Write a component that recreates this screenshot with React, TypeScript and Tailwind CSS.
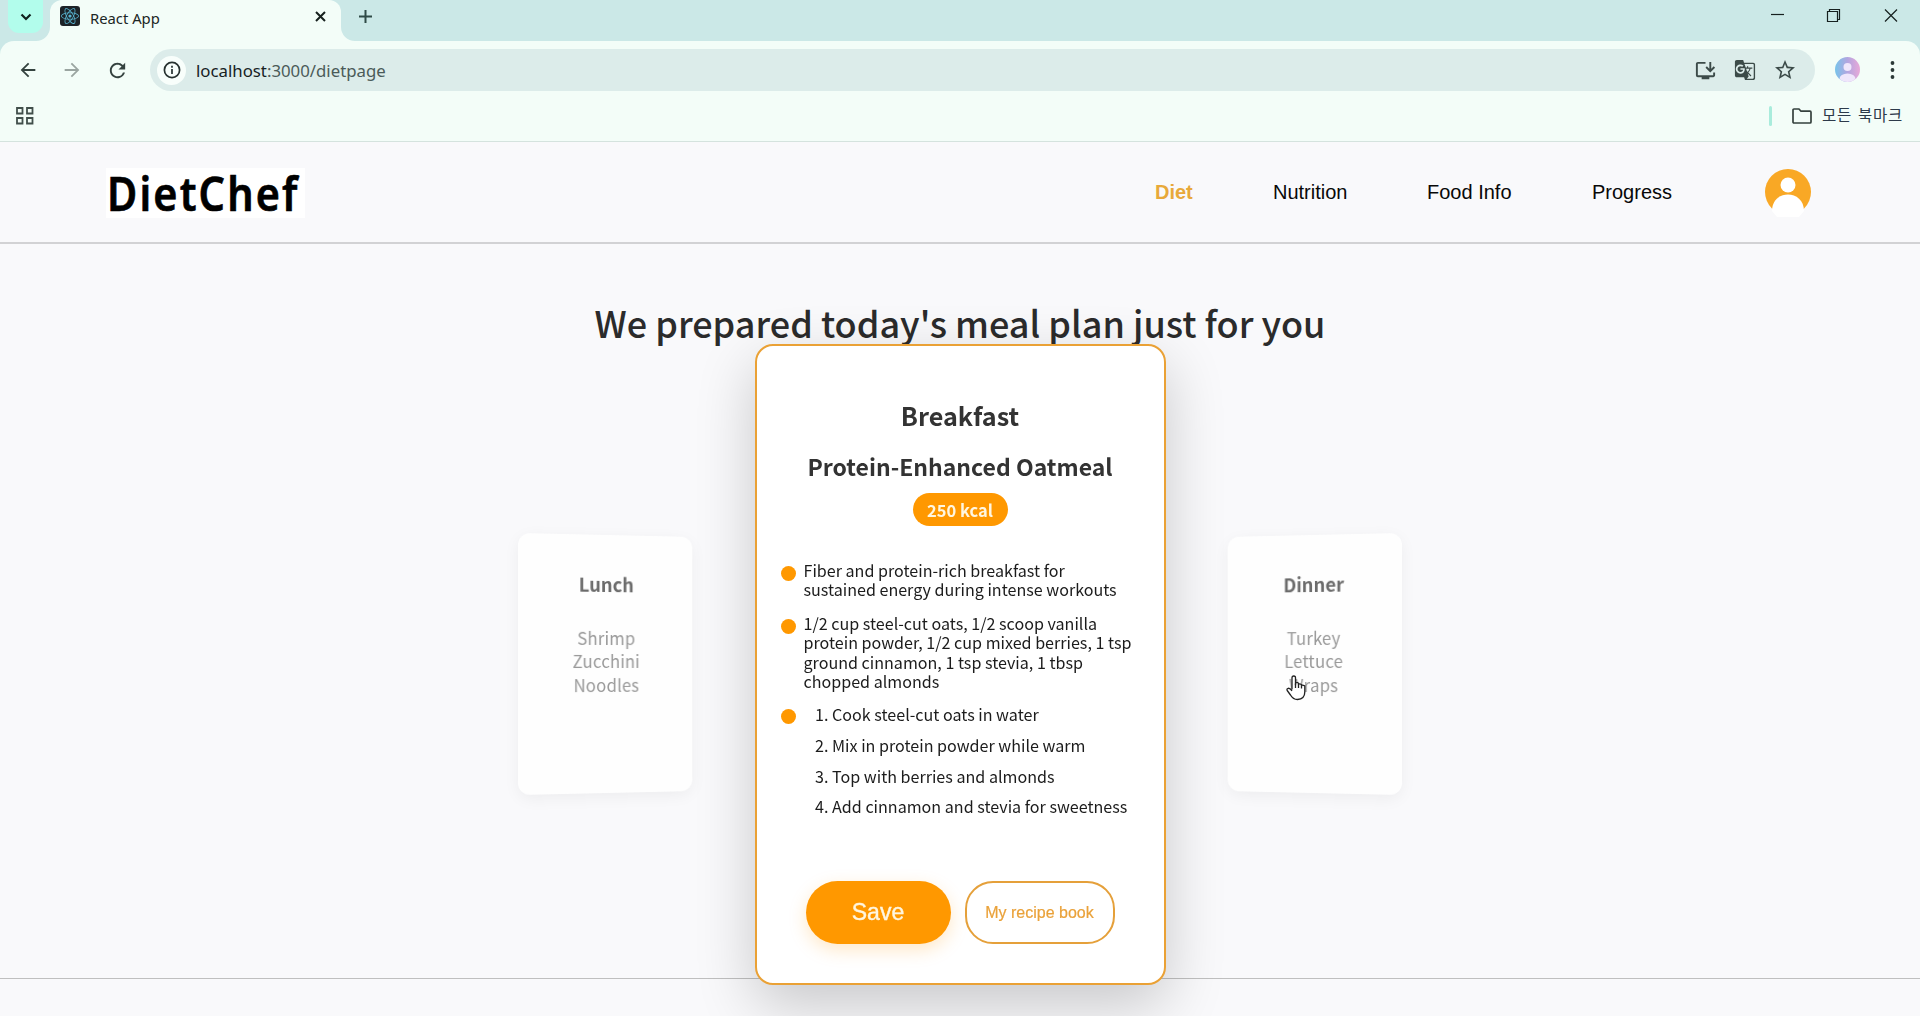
import React from "react";
import { FaReact } from "react-icons/fa";
import { MdGTranslate, MdInstallDesktop, MdStarBorder, MdArrowBack, MdArrowForward, MdRefresh } from "react-icons/md";

const NOTO = "font-['Noto_Sans_CJK_KR','Noto_Sans',sans-serif]";
const UI = "font-['Noto_Sans','Noto_Sans_CJK_KR',sans-serif]";

function TabStrip() {
  return (
    <div className="flex h-[41px] bg-[#cbe8e7]">
      <div className="flex w-[50px] rounded-br-[14px] bg-[#cbe8e7] pl-2">
        <div className="flex h-[33px] w-[35px] items-center justify-center rounded-b-[11px] bg-[#b2fdec]">
          <svg width="12" height="8" viewBox="0 0 12 8" fill="none" stroke="#10211e" strokeWidth="2.2">
            <path d="M1.5 1.5 6 6l4.500-4.500" />
          </svg>
        </div>
      </div>
      <div className="relative flex w-[291px] bg-[#f3fdf8] rounded-t-[12px]">
        <svg className="absolute -left-[14px] bottom-0" width="14" height="14"><path d="M14 0v14H0A14 14 0 0 0 14 0" fill="#f3fdf8" /></svg>
        <svg className="absolute -right-[14px] bottom-0" width="14" height="14"><path d="M0 0v14h14A14 14 0 0 1 0 0" fill="#f3fdf8" /></svg>
        <div className="ml-[10px] mt-[6px] flex h-5 w-5 items-center justify-center rounded-[3px] bg-[#1c2227]">
          <FaReact size={18} color="#58b4d1" />
        </div>
        <div className={`${UI} ml-[10px] mt-[6px] text-[14.800px] leading-6 text-[#1c2625]`}>React App</div>
        <svg className="ml-auto mr-[15px] mt-[11px]" width="11" height="11" viewBox="0 0 11 11" stroke="#17211f" strokeWidth="2">
          <path d="M1 1l9 9M10 1l-9 9" />
        </svg>
      </div>
      <svg className="ml-[18px] mt-[10px]" width="13" height="13" viewBox="0 0 13 13" stroke="#2f4a47" strokeWidth="2">
        <path d="M6.500 0v13M0 6.500h13" />
      </svg>
      <div className="ml-auto flex pr-[22px]">
        <svg className="mt-[9px]" width="127" height="13" viewBox="0 0 127 13" fill="none" stroke="#16201f" strokeWidth="1.200">
          <path d="M0 5.500h13" />
          <path d="M56.500 2.500h10v10h-10zM58.500 2.500v-2h10v10h-2" />
          <path d="M114 .5l12 12M126 .5l-12 12" />
        </svg>
      </div>
    </div>
  );
}

function Toolbar() {
  return (
    <div className="h-[59px] bg-[#cbe8e7]">
      <div className="flex h-full items-start rounded-t-[14px] bg-[#f3fdf8] pt-2">
        <div className="flex h-[42px] w-[150px] shrink-0 items-center">
          <MdArrowBack size={22} color="#34423f" className="ml-[17px]" />
          <MdArrowForward size={22} color="#9aa5a1" className="ml-[22px]" />
          <MdRefresh size={23} color="#34423f" className="ml-[23px]" />
        </div>
        <div className="flex h-[42px] w-[1665px] items-center rounded-full bg-[#dcecea] pl-[7px]">
          <div className="flex h-[29px] w-[29px] items-center justify-center rounded-full bg-[#f8fefb]">
            <svg width="18" height="18" viewBox="0 0 18 18" fill="none" stroke="#26312f" strokeWidth="1.700">
              <circle cx="9" cy="9" r="7.600" />
              <path d="M9 8v5M9 4.800v1.900" />
            </svg>
          </div>
          <div className={`${UI} ml-[10px] translate-y-px text-[16.800px] text-[#16211f]`}>
            localhost<span className="text-[#4b5b59]">:3000/dietpage</span>
          </div>
          <div className="ml-auto flex items-center pr-[18px] text-[#3c4b49]">
            <MdInstallDesktop size={23} />
            <MdGTranslate size={22} className="ml-[17px]" />
            <MdStarBorder size={24} className="ml-[17px]" />
          </div>
        </div>
        <svg className="ml-[20px] mt-2" width="25" height="25" viewBox="0 0 25 25">
          <defs>
            <linearGradient id="profile"><stop offset="0" stopColor="#77c3ea" /><stop offset=".5" stopColor="#b3a6e0" /><stop offset="1" stopColor="#e8a9d8" /></linearGradient>
            <clipPath id="profileClip"><circle cx="12.500" cy="12.500" r="12.500" /></clipPath>
          </defs>
          <g clipPath="url(#profileClip)">
            <path d="M0 0h25v25H0z" fill="url(#profile)" />
            <circle cx="12.500" cy="10" r="4" fill="#efe6fb" />
            <ellipse cx="12.500" cy="22" rx="8" ry="5.500" fill="#efe6fb" />
          </g>
        </svg>
        <svg className="ml-[30px] mt-[12px]" width="5" height="18" viewBox="0 0 5 18" fill="#2c3a37">
          <circle cx="2.500" cy="2" r="1.900" /><circle cx="2.500" cy="9" r="1.900" /><circle cx="2.500" cy="16" r="1.900" />
        </svg>
      </div>
    </div>
  );
}

function Bookmarks() {
  return (
    <div className="flex h-[42px] items-start border-b border-[#d5e3de] bg-[#f3fdf8]">
      <svg className="ml-4 mt-[7px]" width="18" height="18" viewBox="0 0 18 18" fill="none" stroke="#414f4b" strokeWidth="1.800">
        <path d="M1 1h5.500v5.500H1zM11 1h5.500v5.500H11zM1 11h5.500v5.500H1zM11 11h5.500v5.500H11z" />
      </svg>
      <div className="ml-auto mt-[6px] h-5 w-[3px] rounded-full bg-[#a9ecdc]" />
      <svg className="ml-5 mt-[8px]" width="20" height="16" viewBox="0 0 20 16" fill="none" stroke="#35413e" strokeWidth="1.700" strokeLinejoin="round">
        <path d="M1 2Q1 1 2 1h5l2 2.200h9q1 0 1 1V14q0 1-1 1H2q-1 0-1-1z" />
      </svg>
      <div className={`${NOTO} ml-[10px] mr-[17px] mt-[2px] text-[15.500px] leading-6 tracking-[0.700px] [word-spacing:2px] text-[#2d3a4a]`}>모든 북마크</div>
    </div>
  );
}

function Header() {
  return (
    <header className="flex h-[102px] items-center border-b-2 border-[#d2d2d4] bg-[#f9f9fb] pl-[106px] font-['Liberation_Sans',sans-serif] text-[20px] text-[#080808]">
      <div className="mt-px flex h-[50px] w-[199px] items-center bg-white pl-[1px]">
        <span className="origin-left scale-x-[0.87] whitespace-nowrap font-['Noto_Sans',sans-serif] text-[47.500px] font-semibold leading-none tracking-[2.500px] text-black [-webkit-text-stroke:0.700px_#000]">DietChef</span>
      </div>
      <nav className="ml-auto flex">
        <span className="w-[118px] font-bold text-[#e8a93a]">Diet</span>
        <span className="w-[154px]">Nutrition</span>
        <span className="w-[165px]">Food Info</span>
        <span className="w-[173px]">Progress</span>
      </nav>
      <svg className="mr-[109px]" width="46" height="50" viewBox="0 0 46 50">
        <defs><clipPath id="user"><circle cx="23" cy="25" r="23" /></clipPath></defs>
        <circle cx="23" cy="25" r="23" fill="#f9a825" />
        <circle cx="23" cy="18" r="7.500" fill="#fff" />
        <path d="M7 44C7 22 39 22 39 44l-5 6H12z" fill="#fff" />
      </svg>
    </header>
  );
}

function SideCard({ title, lines, tilt }: { title: string; lines: string[]; tilt: string }) {
  return (
    <div className={`${tilt} -mt-[2px] flex h-[258px] w-[177px] flex-col items-center rounded-[12px] bg-[#fefefe] pt-[35px] text-center shadow-[0_4px_16px_rgba(0,0,0,0.05)]`}>
      <div className="text-[18.600px] font-bold leading-7 text-[#6b6b6b]">{title}</div>
      <div className="mt-[27.500px] text-[17px] leading-[23.500px] tracking-[0.150px] text-[#999]">
        {lines.map((l) => <div key={l}>{l}</div>)}
      </div>
    </div>
  );
}

const steps = ["Cook steel-cut oats in water", "Mix in protein powder while warm", "Top with berries and almonds", "Add cinnamon and stevia for sweetness"];

function Item({ children }: { children: React.ReactNode }) {
  return (
    <li className="flex">
      <span className="mr-[8px] mt-[5px] h-[15px] w-[15px] shrink-0 rounded-full bg-[#ff9800]" />
      <div>{children}</div>
    </li>
  );
}

function MealCard() {
  return (
    <article className="relative z-10 flex h-[641px] w-[411px] flex-col items-center rounded-[18px] border-[2.500px] border-[#eaa135] bg-white shadow-[0_20px_60px_rgba(0,0,0,0.2)]">
      <h2 className="mt-[49px] text-[25.200px] font-bold leading-10 text-[#333]">Breakfast</h2>
      <h3 className="mt-[13px] whitespace-nowrap text-[23px] font-bold leading-9 text-[#333]">Protein-Enhanced Oatmeal</h3>
      <div className="mt-[9px] flex h-[33px] w-[95px] items-center justify-center rounded-full bg-[#ff9800] pt-[2px] text-[16.500px] font-bold text-[#fff6e0]">250 kcal</div>
      <ul className="mt-[35px] w-full whitespace-nowrap pl-[24px] text-[16.100px] leading-[19.400px] text-[#1c1c1c]">
        <Item>Fiber and protein-rich breakfast for<br />sustained energy during intense workouts</Item>
        <li className="h-[14px]" />
        <Item>1/2 cup steel-cut oats, 1/2 scoop vanilla<br />protein powder, 1/2 cup mixed berries, 1 tsp<br />ground cinnamon, 1 tsp stevia, 1 tbsp<br />chopped almonds</Item>
        <li className="h-[13px]" />
        <Item>
          <ol className="pl-[11.500px] pt-px">
            {steps.map((s, i) => <li key={s} className="mb-[11.200px]">{i + 1}. {s}</li>)}
          </ol>
        </Item>
      </ul>
      <div className="mb-[39px] mt-auto flex gap-[14px] self-start pl-[49px] font-['Liberation_Sans',sans-serif]">
        <button className="h-[63px] w-[145px] rounded-full bg-[#ff9800] text-[23px] text-[#fff6e0] shadow-[0_6px_18px_rgba(255,152,0,0.22)] [-webkit-text-stroke:0.400px_#fff6e0]">Save</button>
        <button className="h-[63px] w-[150px] whitespace-nowrap rounded-[28px] border-[2.500px] border-[#e5a03a] text-[16px] text-[#eaa23a] [-webkit-text-stroke:0.200px_#eaa23a]">My recipe book</button>
      </div>
    </article>
  );
}

export default function App() {
  return (
    <div className="relative h-[1016px] w-[1920px] overflow-hidden bg-[#f9f9fb]">
      <TabStrip />
      <Toolbar />
      <Bookmarks />
      <Header />
      <main className={`${NOTO} h-[735px] border-b border-[#bfbfbf]`}>
        <div className="flex h-[100px] justify-center pt-[51px]">
          <h1 className="whitespace-nowrap text-[36px] font-medium leading-[54px] text-[#2b2b2b]">We prepared today's meal plan just for you</h1>
        </div>
        <div className="flex h-[641px] items-center justify-center gap-[60px]">
          <SideCard title="Lunch" lines={["Shrimp", "Zucchini", "Noodles"]} tilt="[transform:perspective(1000px)_rotateY(10deg)]" />
          <MealCard />
          <SideCard title="Dinner" lines={["Turkey", "Lettuce", "Wraps"]} tilt="[transform:translateX(-1px)_perspective(1000px)_rotateY(-10deg)]" />
        </div>
      </main>
      <svg className="absolute left-[1286px] top-[675px] z-20" width="21" height="26" viewBox="0 0 21 26" fill="#fff" stroke="#222" strokeWidth="1.300" strokeLinejoin="round">
        <path d="M6 14.500V3Q6 1 7.800 1T9.500 3v7l0-2.200q3-.8 3 1v1.300q0-2 3-.6v1.500q0-1.600 3.300-.2V17q0 7-7.300 7.500Q7 24.500 4.500 20L1.200 15.500q-.8-1.800 1-2.200Q4 13 6 16" />
        <path d="M9.500 8.500v4.500M12.500 9.500V13M15.500 10.500V13.500" />
      </svg>
    </div>
  );
}
